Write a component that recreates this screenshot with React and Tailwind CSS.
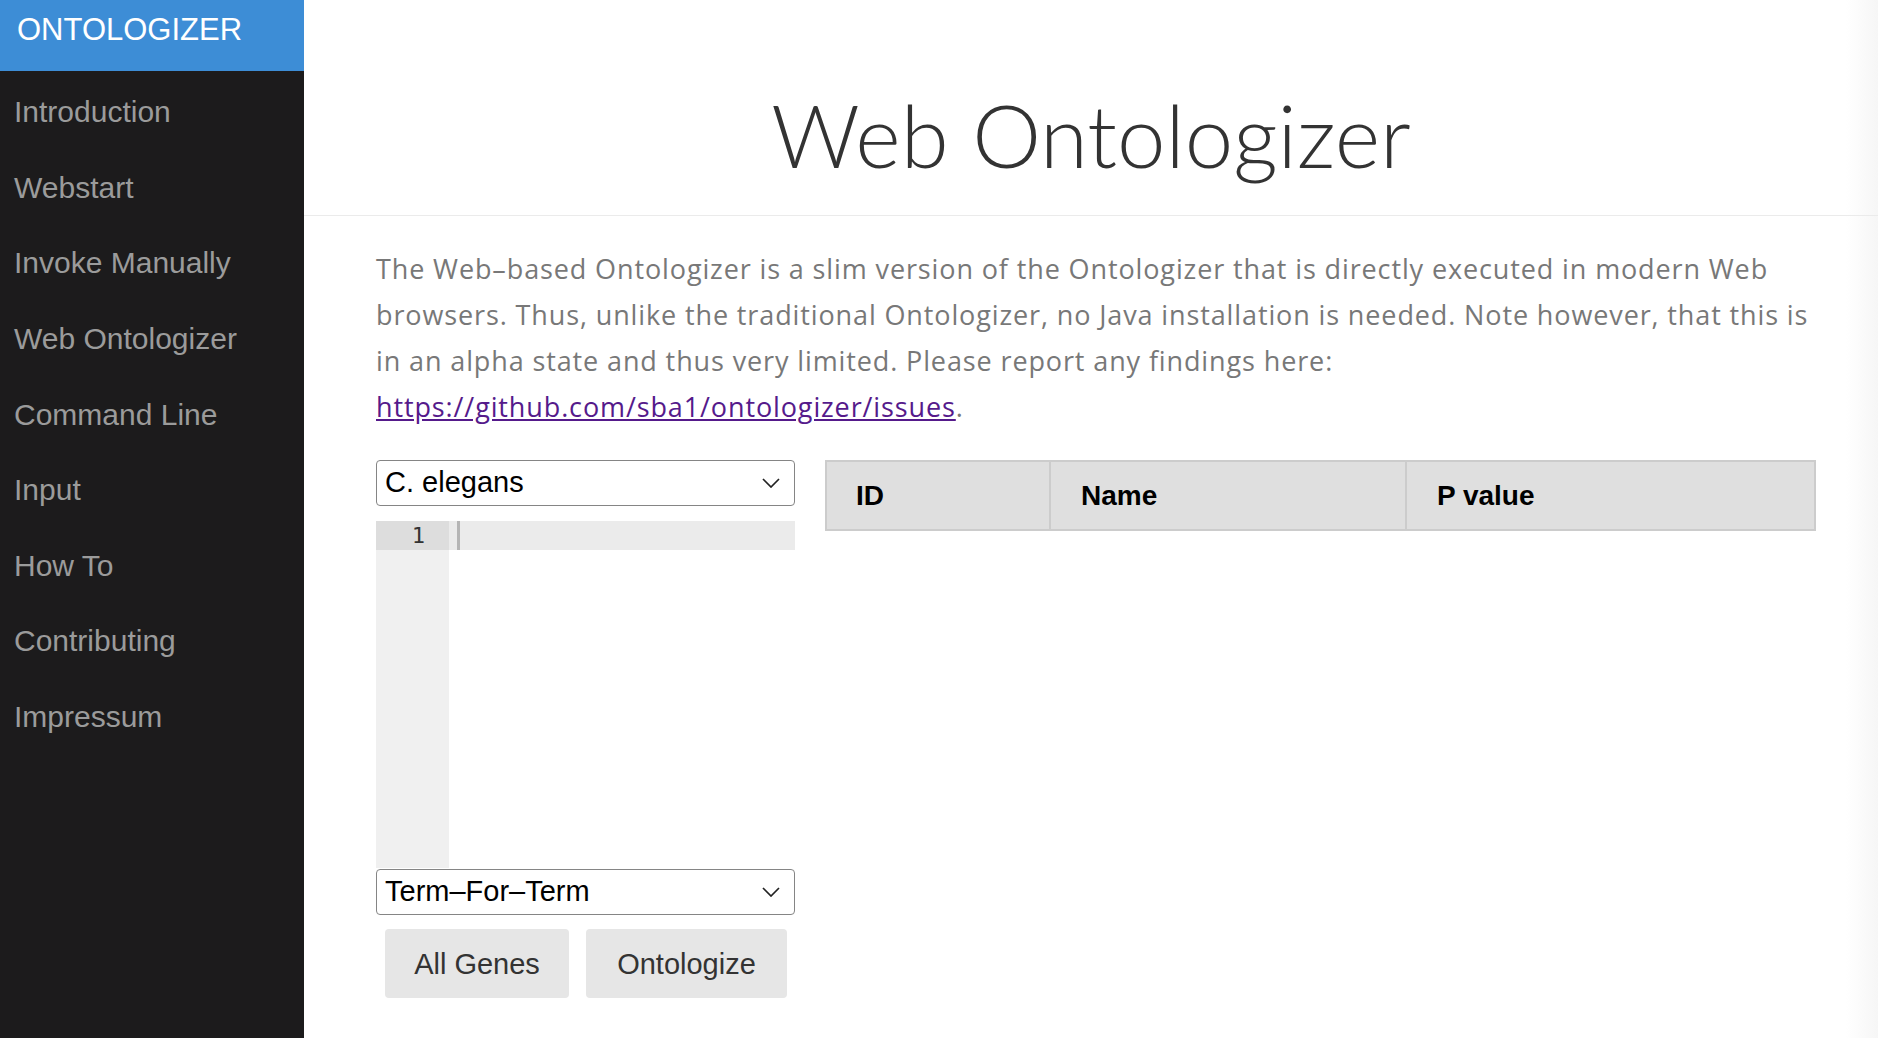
import React from "react";

const navItems = [
    "Introduction",
    "Webstart",
    "Invoke Manually",
    "Web Ontologizer",
    "Command Line",
    "Input",
    "How To",
    "Contributing",
    "Impressum",
];

function Chevron() {
    return (
        <svg width="18" height="10" viewBox="0 0 18 10" fill="none" stroke="#222" strokeWidth="1.7">
            <path d="M1 1l8 8 8-8" />
        </svg>
    );
}

function Select({ value }) {
    return (
        <div className="flex h-[46px] w-[419px] items-center justify-between rounded-[4px] border border-[#858585] bg-white pl-[8px] pr-[14px] text-[29px] text-black">
            <span>{value}</span>
            <Chevron />
        </div>
    );
}

export default function App() {
    return (
        <div className="flex h-screen w-full font-['Liberation_Sans',Arial,sans-serif]">
            {/* sidebar */}
            <aside className="flex w-[304px] shrink-0 flex-col bg-[#1c1b1c]">
                <div className="flex h-[71px] items-center bg-[#3d8dd6] pb-[10px] pl-[17px] text-[31px] text-white">
                    ONTOLOGIZER
                </div>
                <nav className="flex flex-col pt-[3px]">
                    {navItems.map((item) => (
                        <a key={item} href="#" className="flex h-[75.6px] items-center pl-[14px] text-[30px] text-[#9b9b9b]">
                            {item}
                        </a>
                    ))}
                </nav>
            </aside>

            {/* main */}
            <main className="flex-1 bg-[linear-gradient(to_right,#ffffff_calc(100%-32px),#f6f6f6)]">
                <header className="flex h-[216px] justify-center border-b border-[#ebebeb] pt-[91px]">
                    <h1 className="font-['Lato',sans-serif] text-[87px] font-light leading-none text-[#333]">
                        Web Ontologizer
                    </h1>
                </header>

                <div className="pl-[72px] pr-[30px] pt-[30px]">
                    <p className="whitespace-nowrap font-['Open_Sans',sans-serif] text-[27px] leading-[46px] tracking-[0.88px] text-[#787878]">
                        The Web–based Ontologizer is a slim version of the Ontologizer that is directly executed in modern Web
                        <br />
                        browsers. Thus, unlike the traditional Ontologizer, no Java installation is needed. Note however, that this is
                        <br />
                        in an alpha state and thus very limited. Please report any findings here:
                        <br />
                        <a href="#" className="text-[#551a8b] underline">
                            https://github.com/sba1/ontologizer/issues
                        </a>
                        .
                    </p>

                    <div className="mt-[30px] flex gap-[30px]">
                        <div className="flex w-[419px] flex-col">
                            <Select value="C. elegans" />

                            <div className="mt-[15px] flex h-[347px]">
                                <div className="w-[73px] bg-[#f0f0f0]">
                                    <div className="flex h-[29px] items-center justify-end bg-[#dddddd] pr-[24px] font-['DejaVu_Sans_Mono',monospace] text-[22px] text-[#333]">
                                        1
                                    </div>
                                </div>
                                <div className="flex-1">
                                    <div className="flex h-[29px] bg-[#ebebeb] pl-[8px]">
                                        <div className="h-full w-[3px] bg-[#b5b5b5]" />
                                    </div>
                                </div>
                            </div>

                            <div className="mt-[1px]">
                                <Select value="Term–For–Term" />
                            </div>

                            <div className="ml-[9px] mt-[14px] flex gap-[17px]">
                                <button className="flex h-[69px] w-[184px] items-center justify-center rounded-[4px] bg-[#e6e6e6] pt-[3px] text-[29px] text-[#333]">
                                    All Genes
                                </button>
                                <button className="flex h-[69px] w-[201px] items-center justify-center rounded-[4px] bg-[#e6e6e6] pt-[3px] text-[29px] text-[#333]">
                                    Ontologize
                                </button>
                            </div>
                        </div>

                        <table className="h-[71px] w-[991px] border-collapse self-start bg-[#dfdfdf] text-left text-[28px] font-bold text-black">
                            <thead>
                                <tr>
                                    <th className="w-[224px] border-2 border-[#cccccc] pl-[29px] font-bold">ID</th>
                                    <th className="w-[356px] border-2 border-[#cccccc] pl-[30px] font-bold">Name</th>
                                    <th className="border-2 border-[#cccccc] pl-[30px] font-bold">P value</th>
                                </tr>
                            </thead>
                        </table>
                    </div>
                </div>
            </main>
        </div>
    );
}
